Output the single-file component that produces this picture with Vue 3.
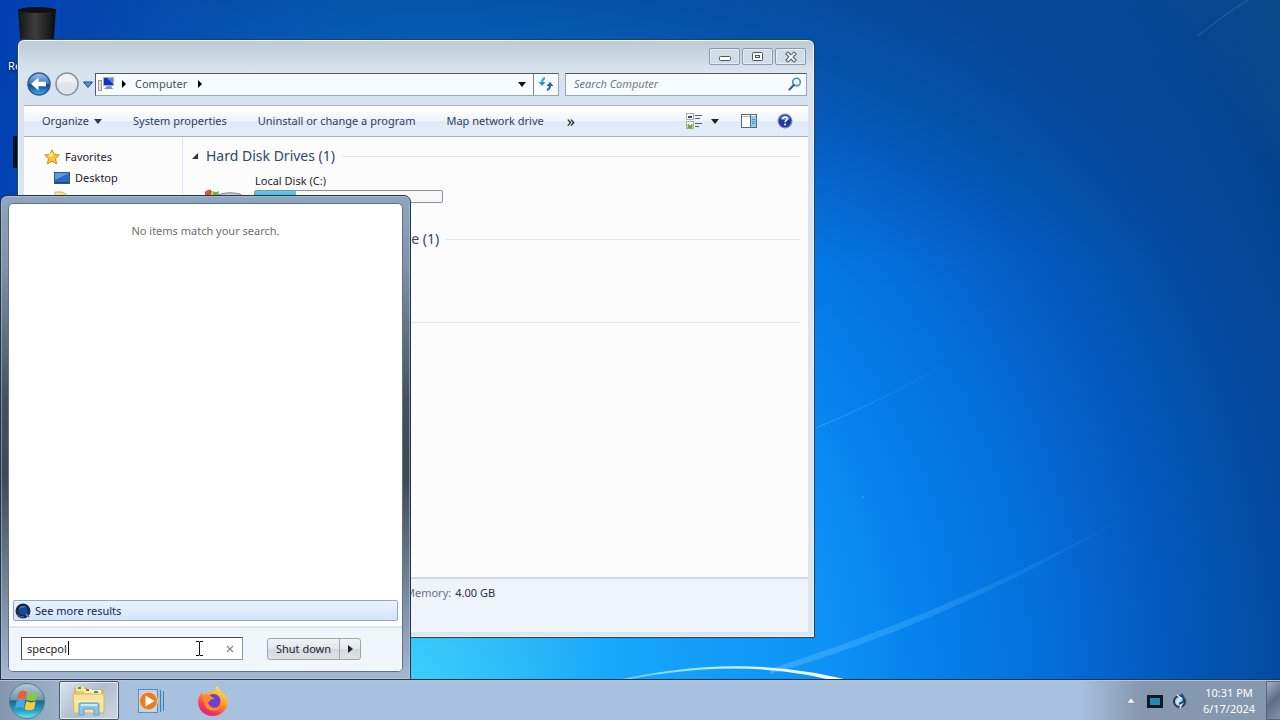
<template>
  <div class="desktop">
    <!-- WALLPAPER -->
    <svg class="wallpaper" viewBox="0 0 1280 720" preserveAspectRatio="xMidYMax slice" aria-hidden="true">
      <defs>
        <radialGradient id="sky" gradientUnits="userSpaceOnUse" cx="400" cy="680" r="1100">
          <stop offset="0" stop-color="#3fd0fc" />
          <stop offset="0.1" stop-color="#2cbcf8" />
          <stop offset="0.2" stop-color="#17a6fa" />
          <stop offset="0.4" stop-color="#0c90f6" />
          <stop offset="0.49" stop-color="#057fec" />
          <stop offset="0.59" stop-color="#056edb" />
          <stop offset="0.69" stop-color="#045abe" />
          <stop offset="0.8" stop-color="#034ba2" />
          <stop offset="0.92" stop-color="#04438c" />
          <stop offset="1" stop-color="#124a80" />
        </radialGradient>
        <linearGradient id="leftShade" x1="0" x2="1" y1="0" y2="0">
          <stop offset="0" stop-color="#003cae" stop-opacity="0.9" />
          <stop offset="1" stop-color="#0a58b6" stop-opacity="0" />
        </linearGradient>
        <linearGradient id="topShade" x1="0" x2="0" y1="0" y2="1">
          <stop offset="0" stop-color="#064894" stop-opacity="0.65" />
          <stop offset="1" stop-color="#064894" stop-opacity="0" />
        </linearGradient>
        <linearGradient id="ray" x1="0" x2="1" y1="0" y2="0">
          <stop offset="0" stop-color="#6cc6ff" stop-opacity="0.4" />
          <stop offset="1" stop-color="#6cc6ff" stop-opacity="0" />
        </linearGradient>
        <linearGradient id="arc" x1="0" x2="1" y1="0" y2="0">
          <stop offset="0" stop-color="#8fe0ff" stop-opacity="0.5" />
          <stop offset="0.5" stop-color="#d4f3ff" />
          <stop offset="1" stop-color="#fff" />
        </linearGradient>
      </defs>
      <rect width="1280" height="720" fill="url(#sky)" />
      <rect x="60" width="1220" height="260" fill="url(#topShade)" />
      <rect width="420" height="720" fill="url(#leftShade)" />
      <path d="M816 428Q880 402 950 362" fill="none" stroke="url(#ray)" stroke-width="1" />
      <path d="M770 674Q960 619 1140 508Q970 605 770 669Z" fill="url(#ray)" />
      <path d="M1198 36Q1225 14 1248 0" fill="none" stroke="#7ba4cf" stroke-opacity="0.3" />
      <path d="M600 684Q745 648 866 685L846 684Q740 653 608 684Z" fill="url(#arc)" />
      <circle cx="863" cy="497" r="1" fill="#5fbcff" opacity="0.5" />
    </svg>

    <!-- DESKTOP ICONS -->
    <div class="shortcuts">
      <div class="shortcut">
        <svg width="40" height="48" viewBox="0 0 40 48">
          <defs>
            <linearGradient id="bin" x1="0" x2="1" y1="0" y2="0">
              <stop offset="0" stop-color="#151515" />
              <stop offset="0.45" stop-color="#3d3d3d" />
              <stop offset="1" stop-color="#0b0b0b" />
            </linearGradient>
          </defs>
          <path d="M1 3L39 3L36 46L4 46Z" fill="url(#bin)" />
          <ellipse cx="20" cy="4" rx="19" ry="3" fill="#101010" />
        </svg>
        <span>Recycle Bin</span>
      </div>
      <div class="shortcut-tile"></div>
    </div>

    <!-- EXPLORER WINDOW -->
    <section class="explorer" aria-label="Computer">
      <header class="titlebar">
        <button class="caption" aria-label="Minimize">
          <svg width="14" height="12" viewBox="0 0 14 12"><rect x="1.500" y="5.500" width="11" height="4" rx="1" fill="#fff" stroke="#4b5566" /></svg>
        </button>
        <button class="caption" aria-label="Maximize">
          <svg width="14" height="12" viewBox="0 0 14 12">
            <rect x="1.500" y="1.500" width="10" height="8" rx="1" fill="#fff" stroke="#4b5566" />
            <rect x="4.500" y="4.500" width="4" height="2" fill="#dde6ef" stroke="#4b5566" />
          </svg>
        </button>
        <button class="caption" aria-label="Close">
          <svg width="14" height="12" viewBox="0 0 14 12">
            <path d="M4 3L10 9M10 3L4 9" stroke="#4b5566" stroke-width="4" stroke-linecap="square" />
            <path d="M4 3L10 9M10 3L4 9" stroke="#fff" stroke-width="2" stroke-linecap="square" />
          </svg>
        </button>
      </header>

      <nav class="navbar">
        <button class="round" aria-label="Back">
          <svg width="24" height="24" viewBox="0 0 24 24">
            <defs>
              <linearGradient id="backFill" x1="0" x2="0" y1="0" y2="1">
                <stop offset="0" stop-color="#9cc4ec" />
                <stop offset="0.48" stop-color="#3c7cc8" />
                <stop offset="0.5" stop-color="#0c3f92" />
                <stop offset="1" stop-color="#36b4f2" />
              </linearGradient>
            </defs>
            <circle cx="12" cy="12" r="11" fill="url(#backFill)" stroke="#355a8c" stroke-width="1.500" />
            <path d="M4 12L11.500 5.500V9.800H19V14.200H11.500V18.500Z" fill="#fff" />
          </svg>
        </button>
        <button class="round" aria-label="Forward">
          <svg width="24" height="24" viewBox="0 0 24 24">
            <circle cx="12" cy="12" r="11" fill="#e0e5eb" stroke="#8593a5" stroke-width="1.500" />
            <path d="M2 12A10 10 0 0 1 22 12Q12 8 2 12Z" fill="#eff2f5" />
          </svg>
        </button>
        <button class="recent" aria-label="Recent pages">
          <svg width="10" height="7" viewBox="0 0 10 7"><path d="M0.500 1H9.500L5 6.500Z" fill="#3f97dc" stroke="#1c4a80" /></svg>
        </button>
        <div class="address">
          <svg width="18" height="16" viewBox="0 0 18 16">
            <rect x="1.500" y="4.500" width="3" height="10" fill="#e4e2d4" stroke="#9c9c94" />
            <rect x="6.500" y="1.500" width="10" height="8" fill="#1430c8" stroke="#a7b2c2" />
            <path d="M10 2H16V8Z" fill="#5f83ef" />
            <path d="M10 10H14L16 13H7Z" fill="#8b97a6" />
          </svg>
          <svg class="crumb-arrow" width="6" height="8" viewBox="0 0 6 8"><path d="M1 0L5 4L1 8Z" /></svg>
          <span class="crumb">Computer</span>
          <svg class="crumb-arrow" width="6" height="8" viewBox="0 0 6 8"><path d="M1 0L5 4L1 8Z" /></svg>
          <button class="history" aria-label="Previous locations">
            <svg width="8" height="5" viewBox="0 0 8 5"><path d="M0 0H8L4 5Z" fill="#111" /></svg>
          </button>
          <button class="refresh" aria-label="Refresh">
            <svg width="16" height="16" viewBox="0 0 16 16" fill="none" stroke-width="2">
              <path d="M7 2Q4 3 4 7" stroke="#3da2dd" />
              <path d="M0.500 6H7.500L4 10Z" fill="#2f8ccc" />
              <path d="M9 14Q12 13 12 9" stroke="#1d5f9e" />
              <path d="M8.500 10H15.500L12 6Z" fill="#1d64a6" />
            </svg>
          </button>
        </div>
        <div class="search">
          <input type="text" placeholder="Search Computer" aria-label="Search Computer" />
          <svg width="14" height="14" viewBox="0 0 14 14" fill="none">
            <circle cx="8.500" cy="5" r="3.800" fill="#e8f5fc" stroke="#4b8fbd" stroke-width="1.600" />
            <path d="M5.800 8L1.500 12.500" stroke="#3f6288" stroke-width="2.200" stroke-linecap="round" />
          </svg>
        </div>
      </nav>

      <div class="toolbar">
        <button v-for="cmd in commands" :key="cmd.label">
          {{ cmd.label }}
          <svg v-if="cmd.menu" width="8" height="5" viewBox="0 0 8 5"><path d="M0 0H8L4 5Z" fill="#2c3a52" /></svg>
        </button>
        <button class="more" aria-label="More commands">»</button>
        <div class="view-tools">
          <button aria-label="Change your view">
            <svg width="16" height="16" viewBox="0 0 16 16">
              <rect x="0.500" y="0.500" width="7" height="6" fill="#fff" stroke="#a5aeba" />
              <path d="M2 4H6" stroke="#35506b" stroke-width="2" />
              <rect x="0.500" y="8.500" width="7" height="7" fill="#fff" stroke="#a5aeba" />
              <path d="M2 11L4 13L6 11V15H2Z" fill="#78a82c" stroke="#78a82c" />
              <path d="M9 2.500H16M9 5.500H14M9 10.500H16M9 13.500H13" stroke="#536274" />
            </svg>
          </button>
          <button aria-label="More view options">
            <svg width="8" height="5" viewBox="0 0 8 5"><path d="M0 0H8L4 5Z" fill="#222" /></svg>
          </button>
          <button class="preview" aria-label="Show the preview pane">
            <svg width="16" height="14" viewBox="0 0 16 14">
              <rect x="0.500" y="0.500" width="15" height="13" fill="#fff" stroke="#556a80" />
              <path d="M1 2.500H15" stroke="#a9bac8" />
              <rect x="10" y="3" width="5" height="10" fill="#8fd0e8" />
              <path d="M9.500 1V13" stroke="#556a80" />
              <path d="M11 5.500H14M11 7.500H14M11 9.500H14" stroke="#4b93b8" />
            </svg>
          </button>
          <button class="help" aria-label="Get help">
            <svg width="16" height="16" viewBox="0 0 16 16">
              <circle cx="8" cy="8" r="7.500" fill="#8493bb" />
              <circle cx="8" cy="8" r="6.300" fill="#2238a4" />
              <path d="M3 6A5.500 5.500 0 0 1 13 6Q8 8 3 6Z" fill="#6e8bdc" />
              <path d="M5.700 6.200Q6 4 8.100 4Q10.400 4.100 10.200 6Q10 7.100 8.900 7.700Q8.100 8.200 8.100 9.300" fill="none" stroke="#fff" stroke-width="1.500" />
              <circle cx="8.100" cy="11.600" r="1" fill="#fff" />
            </svg>
          </button>
        </div>
      </div>

      <div class="content">
        <aside class="sidebar">
          <a href="#" class="fav-head">
            <svg width="16" height="16" viewBox="0 0 16 16">
              <path d="M8 0.800L10.200 5.500L15.400 6.100L11.500 9.600L12.600 14.800L8 12.200L3.400 14.800L4.500 9.600L0.600 6.100L5.800 5.500Z" fill="#fbc62e" stroke="#dc8420" />
              <path d="M8 3L9.300 6.500L6 8L4 7Z" fill="#fff0a4" />
            </svg>
            Favorites
          </a>
          <a href="#" class="fav">
            <svg width="16" height="14" viewBox="0 0 16 14">
              <rect x="0.500" y="1.500" width="15" height="11" fill="#2c6cc0" stroke="#35557c" />
              <path d="M1 2H15L1 9Z" fill="#5b9be2" />
              <path d="M1 11.500H15" stroke="#244868" />
            </svg>
            Desktop
          </a>
          <a href="#" class="fav">
            <svg width="16" height="16" viewBox="0 0 16 16">
              <path d="M1 1H8L12 3V15H1Z" fill="#f8e49a" stroke="#d9b757" />
              <path d="M7 6V11M4 9L7 13L10 9" fill="none" stroke="#3f83ca" stroke-width="2" />
            </svg>
            Downloads
          </a>
        </aside>

        <main class="listing">
          <section v-for="group in groups" :key="group.title" class="group">
            <h2>
              <svg width="8" height="8" viewBox="0 0 8 8"><path d="M7 1V7H1Z" fill="#333" /></svg>
              {{ group.title }} ({{ group.count }})
            </h2>
            <div v-if="group.drive" class="drive">
              <svg width="44" height="26" viewBox="0 0 44 26">
                <path d="M14 8Q24 4 36 7L44 14V21H8V12Z" fill="#c7cbd0" stroke="#7e858d" />
                <path d="M1 5Q5 1 8 4L7 9Q4 7 1 9Z" fill="#d9532c" />
                <path d="M9 4Q12 6 15 4L14 9Q11 11 8 9Z" fill="#7bb132" />
                <path d="M1 10Q4 8 7 10L6 15Q3 13 0 15Z" fill="#3f8cd4" />
                <path d="M8 10Q11 12 14 10L13 15Q10 17 7 15Z" fill="#f4c32c" />
              </svg>
              <div class="drive-info">
                <span>{{ group.drive }}</span>
                <div class="meter"><div class="used" :style="{ width: group.used + '%' }"></div></div>
              </div>
            </div>
          </section>
        </main>
      </div>

      <footer class="details">
        <span class="detail-label">Memory:</span>
        <span>4.00 GB</span>
      </footer>
    </section>

    <!-- START MENU -->
    <section class="start-menu" aria-label="Start menu">
      <div class="start-panel">
        <p class="empty">No items match your search.</p>
        <a href="#" class="see-more">
          <svg width="16" height="16" viewBox="0 0 16 16">
            <circle cx="8" cy="8" r="7.500" fill="#1b2c3c" />
            <circle cx="8" cy="7.500" r="4.500" fill="#104aa4" />
            <path d="M4 6A4.500 4.500 0 0 1 11 4Q7 4 4 6Z" fill="#4c8de0" />
            <path d="M11 11L14 14" stroke="#6f8494" stroke-width="2" />
            <path d="M2 11Q5 15 9 14" fill="none" stroke="#5f7684" />
          </svg>
          See more results
        </a>
        <div class="start-footer">
          <div class="start-search">
            <input v-model="query" type="text" aria-label="Search programs and files" />
            <i class="caret"></i>
            <svg class="ibeam" width="9" height="17" viewBox="0 0 9 17"><path d="M1 1.500H4L4.500 2L5 1.500H8M4.500 2V15M1 15.500H4L4.500 15L5 15.500H8" fill="none" stroke="#111" /></svg>
            <button class="clear" aria-label="Clear search" @click="query = ''">
              <svg width="8" height="8" viewBox="0 0 8 8"><path d="M1 1L7 7M7 1L1 7" stroke="#868686" stroke-width="1.200" /></svg>
            </button>
          </div>
          <div class="power">
            <button>Shut down</button>
            <button class="power-more" aria-label="Power options">
              <svg width="5" height="8" viewBox="0 0 5 8"><path d="M0 0L5 4L0 8Z" fill="#222" /></svg>
            </button>
          </div>
        </div>
      </div>
    </section>

    <!-- TASKBAR -->
    <footer class="taskbar">
      <button class="orb" aria-label="Start">
        <svg width="38" height="38" viewBox="0 0 38 38">
          <defs>
            <linearGradient id="orbFill" x1="0" x2="0" y1="0" y2="1">
              <stop offset="0" stop-color="#b4cbd6" />
              <stop offset="0.46" stop-color="#6d9cae" />
              <stop offset="0.5" stop-color="#1c6788" />
              <stop offset="0.78" stop-color="#23a4ca" />
              <stop offset="1" stop-color="#6eeaf5" />
            </linearGradient>
          </defs>
          <circle cx="19" cy="19" r="17.500" fill="url(#orbFill)" stroke="#58798c" />
          <path d="M11 10Q15 7 19 10L17.500 17.500Q13 15 9 17.500Z" fill="#ee5e2e" />
          <path d="M20 10.500Q25 13 30 10L28 18Q23 20 18.500 17.800Z" fill="#8cc83c" />
          <path d="M8.600 19Q13 16.500 17.200 19L15.500 26.500Q11 24 7 26.500Z" fill="#4ba6e6" />
          <path d="M18.300 19.300Q23 21.500 27.600 19.300L26 27Q21 29.500 16.600 27Z" fill="#fccb35" />
        </svg>
      </button>
      <button class="task active" aria-label="Windows Explorer">
        <svg width="34" height="32" viewBox="0 0 34 32">
          <path d="M3 3H14L16 5H31V27H3Z" fill="#e9cc6d" stroke="#c9a64c" />
          <path d="M4 2H12V6H4Z" fill="#f6e9a8" /><path d="M6 2H9V4H6Z" fill="#2fa83c" />
          <path d="M12 4H20V8H12Z" fill="#fff3bd" /><path d="M14 4H17V6H14Z" fill="#d64b34" />
          <path d="M20 5H29V9H20Z" fill="#fff3bd" /><path d="M22 6H26V8H22Z" fill="#3c86cb" />
          <path d="M1 9H32V28H2Z" fill="#f8e496" stroke="#d8b95d" />
          <path d="M2 16H31" stroke="#fff4c3" />
          <path d="M7 30V20Q7 18 9 18H25Q27 18 27 20V30H22V24H12V30Z" fill="#8ac5ea" stroke="#5c9fd0" />
          <path d="M9 20H25" stroke="#d2ecfb" stroke-width="2" />
        </svg>
      </button>
      <button class="task" aria-label="Windows Media Player">
        <svg width="26" height="26" viewBox="0 0 26 26">
          <path d="M5 2H26V24H5Z" fill="#9cc4e2" />
          <path d="M22.500 2V24M25.500 3V23" stroke="#3d7cab" />
          <rect x="0.500" y="1.500" width="19" height="23" fill="#b9d6eb" stroke="#5991bd" />
          <circle cx="10.500" cy="13" r="9" fill="#ee7a22" stroke="#fbd0a0" />
          <path d="M7.500 7.500L16.500 13L7.500 18.500Z" fill="#fff" />
        </svg>
      </button>
      <button class="task" aria-label="Firefox">
        <svg width="32" height="32" viewBox="0 0 32 32">
          <defs>
            <linearGradient id="fox" x1="0.800" x2="0.300" y1="0.100" y2="1">
              <stop offset="0" stop-color="#ffe14a" />
              <stop offset="0.4" stop-color="#ff9a2c" />
              <stop offset="0.75" stop-color="#fb3c4e" />
              <stop offset="1" stop-color="#e0208c" />
            </linearGradient>
          </defs>
          <path d="M20 1Q23 4 24 7Q28 9 30 13Q32 20 28 25Q23 31 16 31Q8 31 3.500 25Q-0.500 19 2 12Q3 9 5 7L6.500 10Q8 8 11 8Q13 5 18 6Q18 3 20 1Z" fill="url(#fox)" />
          <circle cx="16.500" cy="16" r="7" fill="#7040d0" />
          <path d="M6 11Q11 8 15 12Q18 13 17 14Q13 14 11 18Q13 23 19 23Q24 22 24 18Q24 25 17 26Q9 26 7 18Z" fill="#ff8b2b" />
        </svg>
      </button>

      <div class="tray">
        <button aria-label="Show hidden icons">
          <svg width="8" height="6" viewBox="0 0 8 6"><path d="M4 0L8 5H0Z" fill="#fff" stroke="#68778a" stroke-width="0.500" /></svg>
        </button>
        <button aria-label="Display">
          <svg width="16" height="14" viewBox="0 0 16 14"><rect width="16" height="13" y="1" fill="#101820" /><rect x="3" y="4" width="10" height="7" fill="#2388bc" /></svg>
        </button>
        <button aria-label="Network">
          <svg width="16" height="16" viewBox="0 0 16 16" fill="none">
            <circle cx="7.500" cy="8.500" r="5.500" fill="#b9cbdc" stroke="#1c3d5c" stroke-width="2" />
            <path d="M5 2L9 5L5 9Q6 12 10 10L8 15" stroke="#e9f3fa" stroke-width="1.500" />
            <path d="M9 1Q13 4 11 9L7 11" stroke="#1f5480" stroke-width="2" />
            <path d="M14 4Q16 8 14 13" stroke="#7490ac" />
          </svg>
        </button>
        <time class="clock"><span>10:31 PM</span><span>6/17/2024</span></time>
      </div>
      <button class="show-desktop" aria-label="Show desktop"></button>
    </footer>
  </div>
</template>

<script setup>
import { ref } from 'vue'

const query = ref('specpol')

const commands = [
  { label: 'Organize', menu: true },
  { label: 'System properties' },
  { label: 'Uninstall or change a program' },
  { label: 'Map network drive' },
]

const groups = [
  { title: 'Hard Disk Drives', count: 1, drive: 'Local Disk (C:)', used: 22 },
  { title: 'Devices with Removable Storage', count: 1 },
  { title: 'Other', count: 1 },
]
</script>

<style>
body {
  margin: 0;
}
</style>

<style scoped>
.desktop {
  position: relative;
  display: flex;
  flex-direction: column;
  justify-content: space-between;
  min-height: 100vh;
  overflow: hidden;
  background: #0a6cd0;
  font-family: "Noto Sans", "Open Sans", sans-serif;
  font-size: 11px;
  line-height: 16px;
  color: #1e1e1e;
}

.desktop * {
  box-sizing: border-box;
}

button {
  display: flex;
  align-items: center;
  justify-content: center;
  padding: 0;
  border: none;
  background: none;
  font: inherit;
  color: inherit;
}

input {
  font: inherit;
  color: inherit;
  outline: none;
}

a {
  color: inherit;
  text-decoration: none;
}

svg {
  flex: none;
}

.wallpaper {
  position: absolute;
  inset: 0;
  width: 100%;
  height: 100%;
}

/* DESKTOP ICONS */
.shortcuts {
  position: relative;
  width: 74px;
  padding-top: 6px;
}

.shortcut {
  display: flex;
  flex-direction: column;
  align-items: center;
  gap: 4px;
  color: #fff;
  text-shadow: 0 1px 2px #000;
}

.shortcut-tile {
  width: 48px;
  height: 32px;
  margin: 62px auto 0;
  background: #0a1018;
}

/* EXPLORER WINDOW */
.explorer {
  position: absolute;
  top: 39px;
  right: 465px;
  bottom: 82px;
  left: 17px;
  display: flex;
  flex-direction: column;
  padding: 0 6px 5px;
  border: 1px solid #2a4058;
  border-radius: 7px 7px 0 0;
  background: linear-gradient(#bccad6, #d7e4ee 30px, #d8e2f2 66px, #dbe6f4);
  box-shadow: inset 0 0 0 1px #eef6fb;
}

.titlebar {
  display: flex;
  justify-content: flex-end;
  gap: 2px;
  padding: 8px 2px 7px;
}

.caption {
  width: 31px;
  height: 17px;
  border: 1px solid #8a98a9;
  border-radius: 2px;
  background: #d0dce6;
  box-shadow: inset 0 0 0 1px #e4edf4;
}

.navbar {
  display: flex;
  align-items: center;
  padding: 0 1px 9px 3px;
}

.round {
  width: 24px;
  height: 24px;
  margin-right: 4px;
}

.recent {
  width: 12px;
  padding-right: 2px;
}

.address,
.search {
  display: flex;
  align-items: center;
  height: 23px;
  border: 1px solid #99a5b6;
  border-top-color: #4e5c6e;
  background: #f8fbfe;
}

.address {
  flex: 1;
  min-width: 0;
  padding-left: 1px;
  border-left-color: #4e5c6e;
}

.crumb-arrow {
  margin: 0 6px;
}

.crumb {
  margin: 0 4px 0 2px;
  color: #44506a;
}

.history {
  width: 22px;
  height: 100%;
  margin-left: auto;
}

.refresh {
  width: 25px;
  height: 100%;
  border-left: 1px solid #7c899a;
}

.search {
  width: 242px;
  margin-left: 6px;
  padding: 0 4px 0 8px;
}

.search input {
  flex: 1;
  min-width: 0;
  padding: 0;
  border: none;
  background: none;
}

.search input::placeholder {
  color: #727a84;
  font-style: italic;
  opacity: 1;
}

.toolbar {
  display: flex;
  align-items: center;
  gap: 31px;
  height: 32px;
  padding: 0 15px 0 18px;
  border-top: 1px solid #a3afc5;
  border-bottom: 1px solid #a3afc5;
  background: linear-gradient(#fff, #eff4fc 50%, #e2e9f7 52%, #e4ebf8);
  color: #2c3d5e;
  white-space: nowrap;
}

.toolbar button {
  gap: 5px;
}

.toolbar .more {
  margin-left: -8px;
  font-size: 16px;
  color: #111;
}

.view-tools {
  display: flex;
  align-items: center;
  gap: 9px;
  margin-left: auto;
}

.view-tools .preview {
  margin-left: 13px;
}

.view-tools .help {
  margin-left: 11px;
}

.content {
  display: flex;
  flex: 1;
  min-height: 0;
  overflow: hidden;
  background: #fcfcfd;
}

.sidebar {
  display: flex;
  flex-direction: column;
  flex: none;
  gap: 5px;
  width: 159px;
  padding: 12px 0 0 20px;
  border-right: 1px solid #dfe6ef;
  color: #24202c;
}

.fav-head,
.fav {
  display: flex;
  align-items: center;
  gap: 5px;
}

.fav {
  padding-left: 10px;
}

.listing {
  flex: 1;
  padding: 9px 8px 0;
}

.group {
  height: 83px;
}

h2 {
  display: flex;
  align-items: center;
  gap: 7px;
  margin: 0;
  font-size: 14px;
  line-height: 20px;
  font-weight: normal;
  color: #33446e;
  white-space: nowrap;
}

h2::after {
  content: "";
  flex: 1;
  height: 1px;
  background: #e1e4ea;
}

.drive {
  display: flex;
  align-items: flex-end;
  gap: 6px;
  padding: 7px 0 0 13px;
}

.drive svg {
  margin-bottom: -10px;
}

.drive-info span {
  display: block;
  padding-left: 1px;
}

.meter {
  width: 189px;
  height: 13px;
  margin-top: 1px;
  border: 1px solid #8c9298;
  border-radius: 2px;
  background: #f8f8f9;
}

.used {
  height: 100%;
  background: linear-gradient(#5ccbe8, #26a0da);
}

.details {
  display: flex;
  gap: 4px;
  height: 55px;
  padding: 6px 0 0 381px;
  border-top: 2px solid #d0d9e6;
  background: #eff4fb;
  color: #26304a;
}

.detail-label {
  color: #69707e;
}

/* START MENU */
.start-menu {
  position: absolute;
  top: 195px;
  bottom: 40px;
  left: 0;
  display: flex;
  width: 411px;
  padding: 7px;
  border: 1px solid #233447;
  border-radius: 7px 7px 0 0;
  background: linear-gradient(#8fa6c0, #7f93aa 14%, #43525f 42%, #3d4955 58%, #8294a9 86%, #a5b8d2);
  box-shadow: inset 0 0 0 1px rgba(190, 208, 226, 0.5);
}

.start-panel {
  display: flex;
  flex: 1;
  flex-direction: column;
  overflow: hidden;
  border: 1px solid #5f7187;
  border-radius: 5px;
  background: #fff;
}

.empty {
  flex: 1;
  margin: 0;
  padding-top: 19px;
  color: #6d6d6d;
  text-align: center;
}

.see-more {
  display: flex;
  align-items: center;
  gap: 4px;
  height: 21px;
  margin: 0 4px 5px;
  padding: 0 1px;
  border: 1px solid #86abd9;
  border-radius: 2px;
  background: linear-gradient(#eaf3ff, #d3e4fb);
  color: #14245c;
}

.start-footer {
  display: flex;
  align-items: center;
  gap: 24px;
  height: 45px;
  padding: 0 12px 2px;
  border-top: 2px solid #dde5f2;
  background: #f1f5fc;
}

.start-search {
  position: relative;
  display: flex;
  width: 222px;
  height: 23px;
  border: 1px solid #8d959f;
  border-top-color: #41464e;
  border-left-color: #41464e;
  background: #fff;
}

.start-search input {
  flex: 1;
  min-width: 0;
  padding: 0 5px;
  border: none;
  background: none;
}

.caret {
  position: absolute;
  top: 3px;
  left: 46px;
  width: 1px;
  height: 14px;
  background: #000;
}

.ibeam {
  position: absolute;
  top: 2px;
  right: 38px;
}

.clear {
  width: 24px;
}

.power {
  display: flex;
}

.power button {
  width: 73px;
  height: 22px;
  border: 1px solid #a0a6ae;
  border-radius: 3px 0 0 3px;
  background: linear-gradient(#f2f3f5, #e3e6ea 50%, #d5d9df 52%, #dfe2e7);
  color: #22242c;
}

.power .power-more {
  width: 22px;
  margin-left: -1px;
  border-radius: 0 3px 3px 0;
}

/* TASKBAR */
.taskbar {
  position: relative;
  display: flex;
  align-items: center;
  height: 40px;
  border-top: 1px solid #b5c2d8;
  background: linear-gradient(90deg, #8496ad, #9db2ca 60px, #a8c1de 130px, #a8c1de calc(100% - 200px), #8698af calc(100% - 140px), #8698af);
  box-shadow: 0 -1px #25384c;
}

.orb {
  width: 54px;
  height: 100%;
}

.task {
  width: 60px;
  height: 100%;
  margin-left: 2px;
}

.task.active {
  margin-left: 5px;
  border: 1px solid #48586c;
  border-radius: 2px;
  background: linear-gradient(135deg, #dce5ef, #aebdd0 50%, #ccd7e4);
  box-shadow: inset 0 0 0 1px #e4ecf5;
}

.tray {
  display: flex;
  align-items: center;
  gap: 9px;
  margin-left: auto;
  padding-right: 10px;
}

.tray button:first-child {
  margin-right: 3px;
}

.clock {
  display: flex;
  flex-direction: column;
  align-items: center;
  width: 54px;
  margin-left: 5px;
  color: #fff;
}

.show-desktop {
  width: 14px;
  height: 100%;
  border: 1px solid #54677e;
  border-right: none;
  background: linear-gradient(135deg, #a2b0c0, #5d6f84 50%, #8494a8);
}
</style>
